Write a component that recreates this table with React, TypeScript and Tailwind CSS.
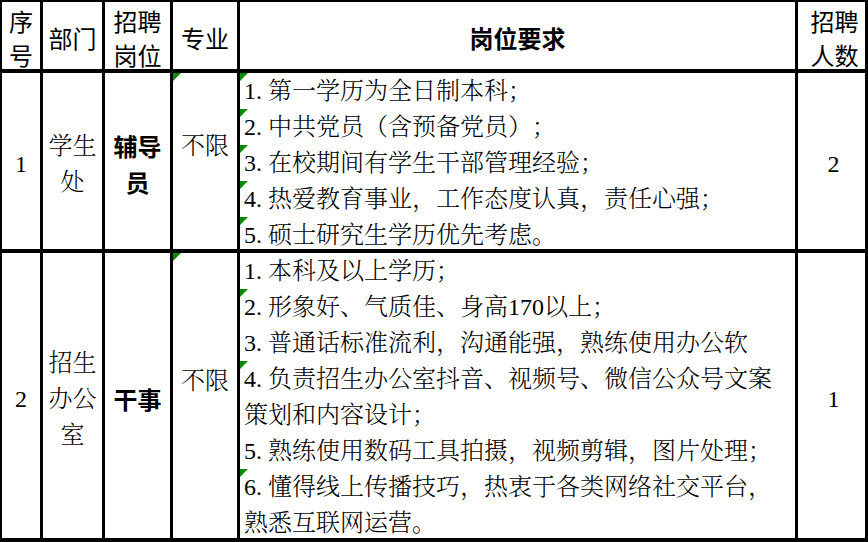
import React from "react";

const serif = "font-['Liberation_Serif','Noto_Serif_CJK_SC','Noto_Sans_CJK_SC',serif]";
const sans = "font-['Noto_Sans_CJK_SC','Noto_Sans',sans-serif]";

function Tri() {
  return (
    <span className="absolute top-0 left-0 w-[8px] h-[8px] bg-[#0a8a0a] [clip-path:polygon(0_0,100%_0,0_100%)]" />
  );
}

type Line = { text: string; tri?: boolean };

function ReqLine({ line }: { line: Line }) {
  const m = line.text.match(/^(\d\.)(.*)$/);
  return (
    <div className="relative h-[36px] leading-[36px] whitespace-nowrap pl-[4px]">
      {line.tri && <Tri />}
      {m ? (
        <>
          <span className="inline-block w-[24px]">{m[1]}</span>
          <span>{m[2]}</span>
        </>
      ) : (
        <span>{line.text}</span>
      )}
    </div>
  );
}

const row1: Line[] = [
  { text: "1.第一学历为全日制本科；", tri: true },
  { text: "2.中共党员（含预备党员）；", tri: true },
  { text: "3.在校期间有学生干部管理经验；", tri: true },
  { text: "4.热爱教育事业，工作态度认真，责任心强；", tri: true },
  { text: "5.硕士研究生学历优先考虑。", tri: true },
];

const row2: Line[] = [
  { text: "1.本科及以上学历；" },
  { text: "2.形象好、气质佳、身高170以上；", tri: true },
  { text: "3.普通话标准流利，沟通能强，熟练使用办公软" },
  { text: "4.负责招生办公室抖音、视频号、微信公众号文案", tri: true },
  { text: "策划和内容设计；" },
  { text: "5.熟练使用数码工具拍摄，视频剪辑，图片处理；" },
  { text: "6.懂得线上传播技巧，热衷于各类网络社交平台，", tri: true },
  { text: "熟悉互联网运营。" },
];

function Head({ lines, bold, extra }: { lines: string[]; bold?: boolean; extra?: string }) {
  return (
    <div
      className={`bg-white flex flex-col items-center justify-center pt-[4px] leading-[34px] text-[24px] text-black ${sans} ${
        bold ? "font-semibold" : "font-normal"
      } ${extra ?? ""}`}
    >
      {lines.map((l) => (
        <div key={l} className="whitespace-nowrap">
          {l}
        </div>
      ))}
    </div>
  );
}

function Cell({
  lines,
  font,
  bold,
  extra,
}: {
  lines: string[];
  font: string;
  bold?: boolean;
  extra?: string;
}) {
  return (
    <div
      className={`relative bg-white flex flex-col items-center justify-center pt-[6px] leading-[36px] text-[24px] text-black overflow-hidden ${font} ${
        bold ? "font-bold" : "font-light"
      } ${extra ?? ""}`}
    >
      {lines.map((l) => (
        <div key={l} className="whitespace-nowrap">
          {l}
        </div>
      ))}
    </div>
  );
}

export default function App() {
  return (
    <div className="w-[868px] h-[542px] bg-black pt-[2px] pl-[2px] pr-[3px] pb-[4px] grid grid-cols-[38px_59px_65px_64px_555px_67px] grid-rows-[67px_176px_285px] gap-x-[3px] gap-y-[4px] overflow-hidden [text-spacing-trim:space-all]">
      {/* header */}
      <Head lines={["序", "号"]} />
      <Head lines={["部门"]} />
      <Head lines={["招聘", "岗位"]} />
      <Head lines={["专业"]} />
      <Head lines={["岗位要求"]} bold />
      <Head lines={["招聘", "人数"]} extra="pl-[6px]" />

      {/* row 1 */}
      <Cell lines={["1"]} font={serif} />
      <Cell lines={["学生", "处"]} font={serif} />
      <Cell lines={["辅导", "员"]} font={sans} bold />
      <div className={`relative bg-white flex items-center justify-center pb-[30px] text-[24px] leading-[36px] text-black font-light ${serif}`}>
        <Tri />
        <span className="whitespace-nowrap">不限</span>
      </div>
      <div className={`bg-white flex flex-col overflow-hidden text-[24px] text-black font-light ${serif}`}>
        {row1.map((l) => (
          <ReqLine key={l.text} line={l} />
        ))}
      </div>
      <Cell lines={["2"]} font={serif} extra="pl-[4px]" />

      {/* row 2 */}
      <Cell lines={["2"]} font={serif} />
      <Cell lines={["招生", "办公", "室"]} font={serif} />
      <Cell lines={["干事"]} font={sans} bold />
      <div className={`relative bg-white flex items-center justify-center pb-[30px] text-[24px] leading-[36px] text-black font-light ${serif}`}>
        <Tri />
        <span className="whitespace-nowrap">不限</span>
      </div>
      <div className={`bg-white flex flex-col overflow-hidden text-[24px] text-black font-light ${serif}`}>
        {row2.map((l) => (
          <ReqLine key={l.text} line={l} />
        ))}
      </div>
      <Cell lines={["1"]} font={serif} extra="pl-[4px]" />
    </div>
  );
}
